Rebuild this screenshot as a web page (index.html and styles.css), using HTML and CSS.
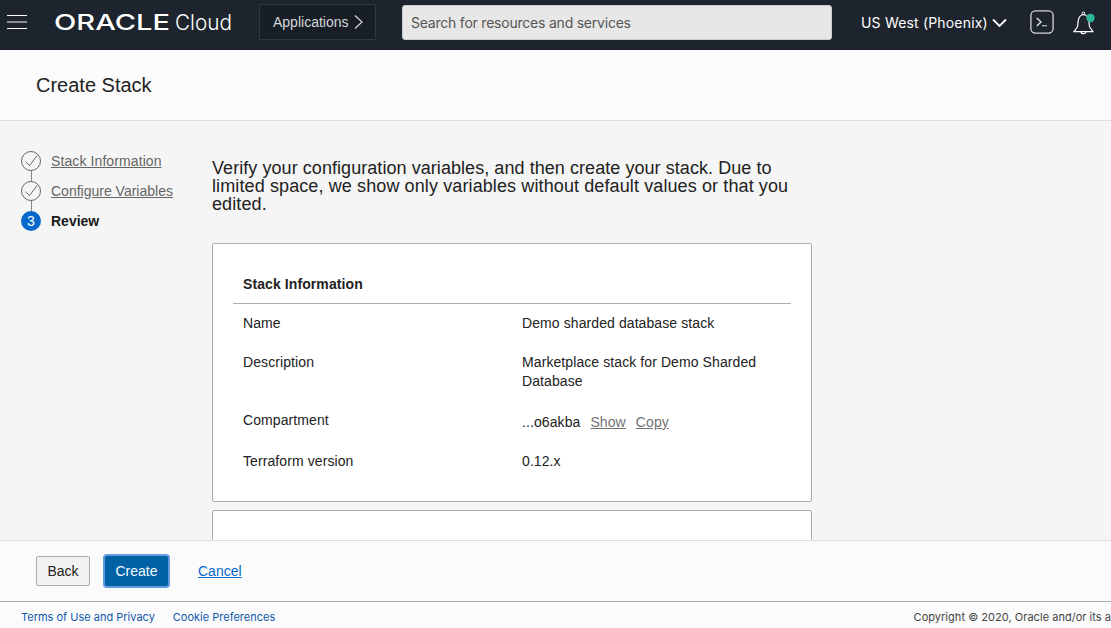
FILE: index.html
```html
<!DOCTYPE html>
<html lang="en">
<head>
<meta charset="utf-8">
<title>Create Stack</title>
<link rel="stylesheet" href="styles.css">
</head>
<body>
<header class="topbar">
  <svg class="menu" width="20" height="16" viewBox="0 0 20 16"><path d="M0 1.5h20M0 14.500h20" stroke="#fff"/><path d="M0 8h20" stroke="#8b8f93" stroke-width="2"/></svg>
  <svg class="logo" width="178" height="30" viewBox="0 0 178 30">
    <text class="logo-oracle" x="-1" y="24.500" textLength="116" lengthAdjust="spacingAndGlyphs">ORACLE</text>
    <text class="logo-cloud" x="120" y="24.500" textLength="57" lengthAdjust="spacingAndGlyphs">Cloud</text>
  </svg>
  <button class="apps"><span>Applications</span><svg width="9" height="16" viewBox="0 0 9 16"><path d="M1 1.500l7 6.500l-7 6.500" fill="none" stroke="#d5d7d9" stroke-width="1.200"/></svg></button>
  <div class="search">Search for resources and services</div>
  <div class="region"><span>US West (Phoenix)</span><svg width="15" height="10" viewBox="0 0 15 10"><path d="M1 1.500l6.500 6.500l6.500-6.500" fill="none" stroke="#fff" stroke-width="1.800"/></svg></div>
  <svg class="shell" width="24" height="24" viewBox="0 0 24 24"><rect x=".9" y=".9" width="22.200" height="22.200" rx="4.500" fill="none" stroke="#d4d6d8" stroke-width="1.300"/><path d="M6.800 8l4.200 4l-4.200 4" fill="none" stroke="#e8e9ea" stroke-width="1.300"/><path d="M12 15.700h5" stroke="#b9bcbf" stroke-width="1.300"/></svg>
  <svg class="bell" width="22" height="24" viewBox="0 0 22 24"><path d="M1 20.700L4.200 16.300C5.200 14.500 4.500 11.500 5.500 8.500C6.200 5.500 8 3.800 10.500 3.500C13 3.800 14.800 5.500 15.500 8.500C16.500 11.500 15.800 14.500 16.800 16.300L20 20.700Z" fill="none" stroke="#fff" stroke-width="1.200"/><circle cx="10.500" cy="2.300" r="1.300" fill="none" stroke="#fff"/><path d="M8 20.700a2.500 2 0 0 0 5 0" fill="none" stroke="#fff" stroke-width="1.200"/><circle cx="17.500" cy="7" r="4.200" fill="#2cb798"/></svg>
</header>
<div class="titlebar"><h1>Create Stack</h1></div>
<main class="main">
  <nav class="steps">
    <a class="step first"><svg width="20" height="20" viewBox="0 0 20 20"><circle cx="10" cy="10" r="9.500" fill="none" stroke="#666"/><path d="M4.500 10.800l4 3.800l7.500-10" fill="none" stroke="#666"/></svg><span>Stack Information</span></a>
    <i class="link"></i>
    <a class="step"><svg width="20" height="20" viewBox="0 0 20 20"><circle cx="10" cy="10" r="9.500" fill="none" stroke="#666"/><path d="M4.500 10.800l4 3.800l7.500-10" fill="none" stroke="#666"/></svg><span>Configure Variables</span></a>
    <i class="link"></i>
    <div class="step current"><b class="num">3</b><span>Review</span></div>
  </nav>
  <section class="content">
    <p class="intro"><span class="line l1">Verify your configuration variables, and then create your stack. Due to</span> <span class="line l2">limited space, we show only variables without default values or that you</span> <span class="line">edited.</span></p>
    <div class="card">
      <h2>Stack Information</h2>
      <dl class="details">
        <dt>Name</dt><dd>Demo sharded database stack</dd>
        <dt>Description</dt><dd>Marketplace stack for Demo Sharded Database</dd>
        <dt>Compartment</dt><dd class="ocid"><span>...o6akba</span><a>Show</a><a>Copy</a></dd>
        <dt>Terraform version</dt><dd>0.12.x</dd>
      </dl>
    </div>
    <div class="card next"></div>
  </section>
</main>
<div class="actions"><button class="btn back">Back</button><button class="btn create">Create</button><a class="cancel">Cancel</a></div>
<footer class="footer"><a class="terms">Terms of Use and Privacy</a><a class="cookies">Cookie Preferences</a><span class="copyright">Copyright © 2020, Oracle and/or its a</span></footer>
</body>
</html>
```
FILE: styles.css
```css
* { box-sizing: border-box; }
body { margin: 0; width: 1111px; height: 628px; overflow: hidden; display: flex; flex-direction: column; background: #f5f5f5; color: #222; font: 14px/19px "Liberation Sans", Arial, sans-serif; }
button { font: inherit; padding: 0; }
svg { flex: none; display: block; }
.topbar { height: 50px; flex: none; background: #1d242d; border-bottom: 1px solid #171d25; display: flex; align-items: flex-start; white-space: nowrap; font-family: Inter, "Liberation Sans", sans-serif; }
.menu { margin: 14px 0 0 7px; }
.logo { margin: 5px 0 0 28px; fill: #fff; overflow: visible; }
.logo-oracle { font: 500 21px Inter, sans-serif; }
.logo-cloud { font: 300 21px Inter, "Liberation Sans", sans-serif; }
.apps { width: 117px; height: 36px; margin: 4px 0 0 26px; padding-left: 13px; display: flex; align-items: center; gap: 5px; background: #171e26; border: 1px solid #303740; border-radius: 1px; color: #d5d7d9; font-family: "Liberation Sans", sans-serif; }
.search { width: 430px; height: 35px; margin: 5px 0 0 26px; padding-left: 8px; background: #e7e7e7; border: 1px solid #c9cbd0; border-radius: 3px; color: #555; line-height: 34px; font-size: 14px; letter-spacing: -.22px; }
.region { display: flex; align-items: center; gap: 5px; margin: 13px 0 0 29px; color: #fff; letter-spacing: .18px; }
.region span { width: 126px; }
.shell { margin: 10px 0 0 23px; }
.bell { margin: 11px 0 0 19px; }
.titlebar { height: 71px; flex: none; padding: 23px 36px 0; background: #fbfbfb; border-bottom: 1px solid #e0e0e0; }
h1 { margin: 0; font-size: 20px; line-height: 24px; font-weight: 400; }
.main { flex: 1; min-height: 0; overflow: hidden; display: flex; }
.steps { width: 212px; flex: none; padding: 30px 0 0 21px; }
.step { display: flex; align-items: center; gap: 10px; height: 20px; color: #666; text-decoration: underline; }
.first { letter-spacing: .1px; }
.link { display: block; width: 1px; height: 10px; margin-left: 10px; background: #888; }
.current { color: #1a1a1a; font-weight: 700; text-decoration: none; }
.num { width: 20px; height: 20px; border-radius: 50%; background: #0569cb; color: #fff; text-align: center; line-height: 20px; font-weight: 400; }
.content { width: 600px; flex: none; padding-top: 38px; }
.intro { margin: 0 0 30px; font-size: 18px; line-height: 18px; letter-spacing: .1px; }
.line { display: block; white-space: nowrap; }
.l1 { letter-spacing: .06px; }
.l2 { letter-spacing: .11px; }
.card { height: 259px; padding: 30px 20px 0; background: #fff; border: 1px solid #a9adb6; border-radius: 2px; letter-spacing: .09px; }
.next { height: 100px; margin-top: 8px; }
h2 { margin: 0; padding: 0 10px 9px; height: 30px; font-size: 14px; line-height: 21px; font-weight: 700; border-bottom: 1px solid #a9adb6; }
.details { margin: 0; padding: 10px 10px 0; display: grid; grid-template-columns: 279px 249px; grid-template-rows: 39px 58px 41px 20px; }
dt, dd { margin: 0; }
.ocid { display: flex; gap: 10px; padding-top: 2px; }
.ocid a { color: #727272; text-decoration: underline; }
.actions { height: 61px; flex: none; display: flex; align-items: center; padding-left: 36px; background: #fbfbfb; border-top: 1px solid #dedede; }
.btn { height: 30px; border-radius: 2px; }
.back { width: 54px; background: #f2f2f2; border: 1px solid #a9adb6; color: #222; }
.create { width: 63px; margin-left: 15px; background: #0062a5; border: 0; box-shadow: 0 0 0 2px #649ae0; color: #f5faff; }
.cancel { margin-left: 30px; color: #0569cb; text-decoration: underline; }
.footer { height: 27px; flex: none; padding: 8px 0 0 21px; display: flex; background: #fbfbfb; border-top: 1px solid #a9adb6; white-space: nowrap; overflow: hidden; font: 11px/15px Inter, sans-serif; color: #444; }
.terms, .cookies { color: #1058ae; }
.cookies { margin-left: 18px; }
.copyright { margin-left: auto; letter-spacing: .03px; }
```
